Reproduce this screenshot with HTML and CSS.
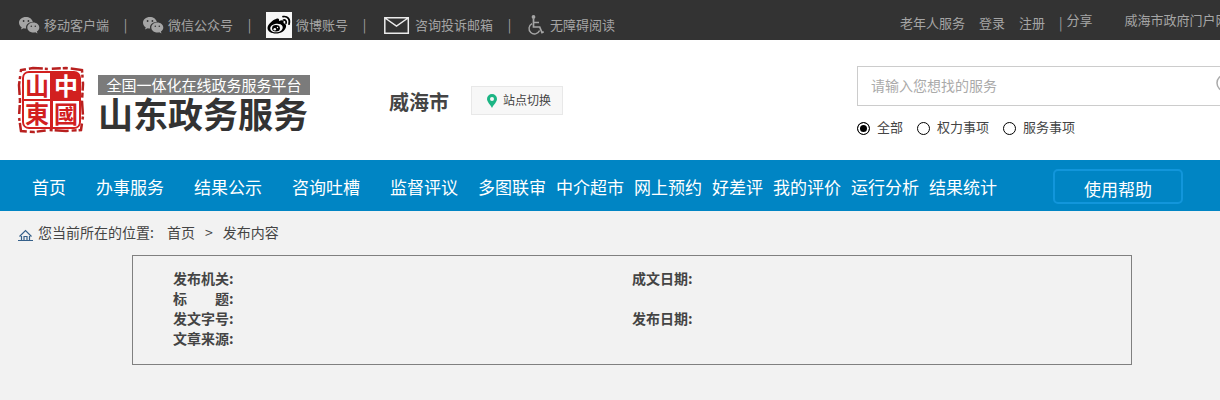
FILE: index.html
```html
<!DOCTYPE html>
<html lang="zh-CN">
<head>
    <meta charset="UTF-8">
    <meta name="viewport" content="width=device-width, initial-scale=1.0">
    <title>山东政务服务 - 威海市</title>
    <link rel="stylesheet" href="styles.css">
</head>
<body>
    <svg class="symbols" aria-hidden="true">
        <symbol id="wechat" viewBox="0 0 22 18">
            <path fill="#a5a5a5" d="M8 1C3.900 1 1 3.500 1 6.700c0 1.900 1 3.500 2.700 4.600L3 13.500l2.600-1.300c.9.200 1.700.4 2.600.4C7.300 8.900 10.200 5.900 14.800 5.900 14.100 3 11.300 1 8 1z"/>
            <path fill="#a5a5a5" d="M15.300 6.600c-3.400 0-6 2.200-6 5s2.600 5 6 5c.7 0 1.400-.1 2-.3l2.200 1.200-.6-1.900c1.500-.9 2.400-2.400 2.400-4 0-2.800-2.600-5-6-5z"/>
            <g fill="#333"><circle cx="5.600" cy="5" r=".9"/><circle cx="10.400" cy="5" r=".9"/><circle cx="13.300" cy="10.200" r=".8"/><circle cx="17.300" cy="10.200" r=".8"/></g>
        </symbol>
    </svg>

    <div class="topbar">
        <div class="topbar-left">
            <a href="#"><svg width="22" height="18"><use href="#wechat"/></svg>移动客户端</a>
            <span class="sep">|</span>
            <a href="#"><svg width="22" height="18"><use href="#wechat"/></svg>微信公众号</a>
            <span class="sep">|</span>
            <a href="#">
                <svg width="26" height="26" viewBox="0 0 26 26">
                    <path fill="#f7f7f7" d="M0 0h26v26H0z"/>
                    <path d="M10 7c2-1 3.500-.5 3 2 3-1.300 5.500-.8 4.500 2 2.200.7 3 2 2.500 4-.8 3.800-5 6.500-10 6.500-4.800 0-8.500-2.200-8.500-5.500C1.500 12.700 6.500 8 10 7z"/>
                    <ellipse cx="10.500" cy="16" rx="6.300" ry="4.300" fill="#f7f7f7" transform="rotate(-8 10.500 16)"/>
                    <ellipse cx="10" cy="16.300" rx="3.900" ry="3.200"/>
                    <circle cx="8.800" cy="17.200" r="1.300" fill="#f7f7f7"/>
                    <circle cx="11.500" cy="15.500" r=".7" fill="#f7f7f7"/>
                    <path fill="none" stroke="#000" stroke-width="1.700" stroke-linecap="round" d="M17 4.600c4.800-.8 7.500 3 6 7.600M17.500 8c2-.3 3.200 1.300 2.500 3.300"/>
                </svg>微博账号</a>
            <span class="sep">|</span>
            <a href="#">
                <svg width="30" height="20" viewBox="0 0 30 20">
                    <path fill="none" stroke="#ececec" stroke-width="1.500" d="M3.800 2.800h23.500v15.500H3.800zM4 3l11.500 8L27 3"/>
                </svg>咨询投诉邮箱</a>
            <span class="sep">|</span>
            <a href="#">
                <svg width="20" height="22" viewBox="0 0 20 22">
                    <circle cx="7.500" cy="3" r="1.900" fill="#a5a5a5"/>
                    <path fill="none" stroke="#a5a5a5" stroke-width="1.700" d="M7.500 5v8h6.200l2.300 5.500 1.700-.8M8 8.500h5"/>
                    <path fill="none" stroke="#a5a5a5" stroke-width="1.400" d="M6 9.600a5.500 5.500 0 1 0 7.600 7"/>
                </svg>无障碍阅读</a>
        </div>
        <div class="topbar-right">
            <a href="#">老年人服务</a>
            <a href="#">登录</a>
            <a href="#">注册</a>
            <span>|</span>
            <a class="share" href="#">分享</a>
            <a class="portal" href="#">威海市政府门户网站</a>
        </div>
    </div>

    <div class="header">
        <a class="logo" href="#">
            <svg width="70" height="68" viewBox="0 0 70 68">
                <path fill="none" stroke="#b8201f" stroke-width="2.500" stroke-dasharray="5 3 14 2 3 4 9 2" d="M5 4l12-2 16 1 17-1 16 2 1 14-1 17 1 15-2 14-15 1-17-1-15 2-13-1-2-14 1-16-1-16z"/>
                <rect x="6" y="5" width="59" height="58" rx="7" fill="#d2201f"/>
                <path fill="#fff" d="M13 7h21v26H8V12q0-5 5-5zM8 35h26v26H13q-5 0-5-5zM37 35h26v21q0 5-5 5H37z"/>
                <g class="seal-text">
                    <text x="9" y="29">山</text>
                    <text x="9" y="57">東</text>
                    <text class="light" x="38" y="29">中</text>
                    <text x="38" y="57">國</text>
                </g>
            </svg>
            <span class="logo-words">
                <span class="platform">全国一体化在线政务服务平台</span>
                <strong>山东政务服务</strong>
            </span>
        </a>
        <h1>威海市</h1>
        <button class="switch" type="button">
            <svg width="12" height="16" viewBox="0 0 12 16">
                <path fill="#1cb584" fill-rule="evenodd" d="M6 1a5 5 0 0 0-5 5c0 3 3 5 5 9 2-4 5-6 5-9a5 5 0 0 0-5-5zm0 3a2 2 0 1 1 0 4 2 2 0 0 1 0-4z"/>
            </svg>站点切换</button>
        <form class="search">
            <div class="search-box">
                <input type="text" aria-label="搜索服务" placeholder="请输入您想找的服务">
                <svg width="24" height="24" viewBox="0 0 24 24">
                    <path fill="none" stroke="#aaa" stroke-width="1.500" d="M9 1a8 8 0 1 0 0 16A8 8 0 0 0 9 1zM15 15l7 7"/>
                </svg>
            </div>
            <div class="scope">
                <label><input type="radio" name="scope" checked>全部</label>
                <label><input type="radio" name="scope">权力事项</label>
                <label><input type="radio" name="scope">服务事项</label>
            </div>
        </form>
    </div>

    <nav class="nav">
        <a class="wide" href="#">首页</a>
        <a class="wide" href="#">办事服务</a>
        <a class="wide" href="#">结果公示</a>
        <a class="wide" href="#">咨询吐槽</a>
        <a class="wide" href="#">监督评议</a>
        <a href="#">多图联审</a>
        <a href="#">中介超市</a>
        <a href="#">网上预约</a>
        <a href="#">好差评</a>
        <a href="#">我的评价</a>
        <a href="#">运行分析</a>
        <a href="#">结果统计</a>
        <a class="help" href="#">使用帮助</a>
    </nav>

    <div class="crumbs">
        <svg width="16" height="14" viewBox="0 0 16 14">
            <path fill="none" stroke="#35608a" stroke-width="1.200" d="M0 12.500h15M1.500 8.500l6-6 6 6M3.500 8v4M11.500 8v4M6 12V8.500h3V12"/>
        </svg>
        <span class="where">您当前所在的位置:</span>
        <a href="#">首页</a>
        <span>&gt;</span>
        <a href="#">发布内容</a>
    </div>

    <div class="info">
        <table>
            <tr><th>发布机关:</th><th>成文日期:</th></tr>
            <tr><th>标&#12288;&#12288;题:</th><th></th></tr>
            <tr><th>发文字号:</th><th>发布日期:</th></tr>
            <tr><th>文章来源:</th><th></th></tr>
        </table>
    </div>
</body>
</html>
```

FILE: styles.css
```css
* {
    box-sizing: border-box;
}
body {
    margin: 0;
    font-family: "Noto Sans CJK SC", sans-serif;
    font-size: 14px;
    color: #444;
    background-color: #f2f2f2;
    overflow-x: hidden;
}
a {
    color: inherit;
    text-decoration: none;
    white-space: nowrap;
}
svg {
    flex: none;
}
.symbols {
    display: none;
}

/* 顶部 */
.topbar {
    display: flex;
    justify-content: space-between;
    height: 40px;
    padding-left: 18px;
    background-color: #333;
    color: #a5a5a5;
    font-size: 13px;
}
.topbar-left {
    display: flex;
    align-items: center;
    padding-top: 8px;
}
.topbar-left a {
    display: flex;
    align-items: center;
    gap: 4px;
}
.topbar-left svg {
    margin-top: 2px;
}
.sep {
    width: 33px;
    text-align: center;
}
.topbar-right {
    display: flex;
    width: 320px;
    overflow: hidden;
    line-height: 46px;
}
.topbar-right a {
    margin-right: 14px;
}
.topbar-right .share {
    margin-left: 4px;
    margin-right: 32px;
    line-height: 40px;
}
.topbar-right .portal {
    margin-right: 0;
    line-height: 40px;
}

/* 头部 */
.header {
    display: flex;
    align-items: flex-start;
    height: 120px;
    padding-left: 16px;
    background-color: #fff;
}
.logo {
    display: flex;
    gap: 12px;
    padding-top: 26px;
    color: #333;
}
.seal-text {
    font-size: 24px;
    font-weight: bold;
    fill: #d2201f;
}
.seal-text .light {
    fill: #fff;
}
.logo-words {
    display: flex;
    flex-direction: column;
    width: 212px;
    padding-top: 9px;
}
.platform {
    background-color: #7b7b7b;
    color: #fff;
    font-size: 15px;
    line-height: 20px;
    text-align: center;
}
.logo-words strong {
    font-size: 35px;
    line-height: 36px;
}
h1 {
    margin: 48px 22px 0 79px;
    font-size: 20px;
    line-height: 28px;
    white-space: nowrap;
}
.switch {
    display: flex;
    align-items: center;
    justify-content: center;
    gap: 5px;
    width: 92px;
    height: 29px;
    margin-top: 46px;
    padding: 0 0 2px 3px;
    border: 1px solid #e8e8e8;
    background-color: #f7f7f7;
    color: #444;
    font-family: inherit;
    font-size: 12px;
    white-space: nowrap;
}
.switch svg {
    margin-top: 3px;
}
.search {
    width: 363px;
    margin: 26px 0 0 auto;
    overflow: hidden;
}
.search-box {
    display: flex;
    align-items: center;
    width: 400px;
    height: 40px;
    border: 1px solid #ccc;
}
.search-box input {
    width: 358px;
    height: 38px;
    padding: 0 13px 2px;
    border: 0;
    font-family: inherit;
    font-size: 14px;
}
.search-box input::placeholder {
    color: #aaa;
}
.scope {
    display: flex;
    gap: 14px;
    padding-top: 11px;
    font-size: 13px;
    line-height: 20px;
}
.scope label {
    display: flex;
    align-items: center;
    gap: 7px;
}
.scope input {
    appearance: none;
    width: 13px;
    height: 13px;
    margin: 2px 0 0;
    border: 1px solid #000;
    border-radius: 50%;
    background-color: #fff;
}
.scope input:checked {
    background-color: #000;
    box-shadow: inset 0 0 0 2px #fff;
}

/* 导航 */
.nav {
    display: flex;
    height: 51px;
    padding: 0 37px 0 17px;
    background-color: #0085c4;
    color: #fff;
    font-size: 17px;
    line-height: 54px;
}
.nav a {
    padding: 0 5px;
}
.nav .wide {
    padding: 0 15px;
}
.nav .help {
    width: 130px;
    height: 35px;
    margin: 9px 0 0 auto;
    border: 2px solid #1296db;
    border-radius: 5px;
    line-height: 36px;
    text-align: center;
}

/* 当前位置 */
.crumbs {
    display: flex;
    align-items: center;
    height: 44px;
    padding: 0 18px 2px;
    gap: 10px;
}
.crumbs svg {
    margin: 6px -6px 0 0;
}
.crumbs .where {
    margin-right: 3px;
}

.info {
    margin: 0 88px 0 132px;
    padding: 12px 40px 16px;
    border: 1px solid #808080;
}
.info table {
    width: 100%;
    border-collapse: collapse;
    table-layout: fixed;
}
.info th {
    height: 20px;
    padding: 0;
    line-height: 20px;
    text-align: left;
}
```
